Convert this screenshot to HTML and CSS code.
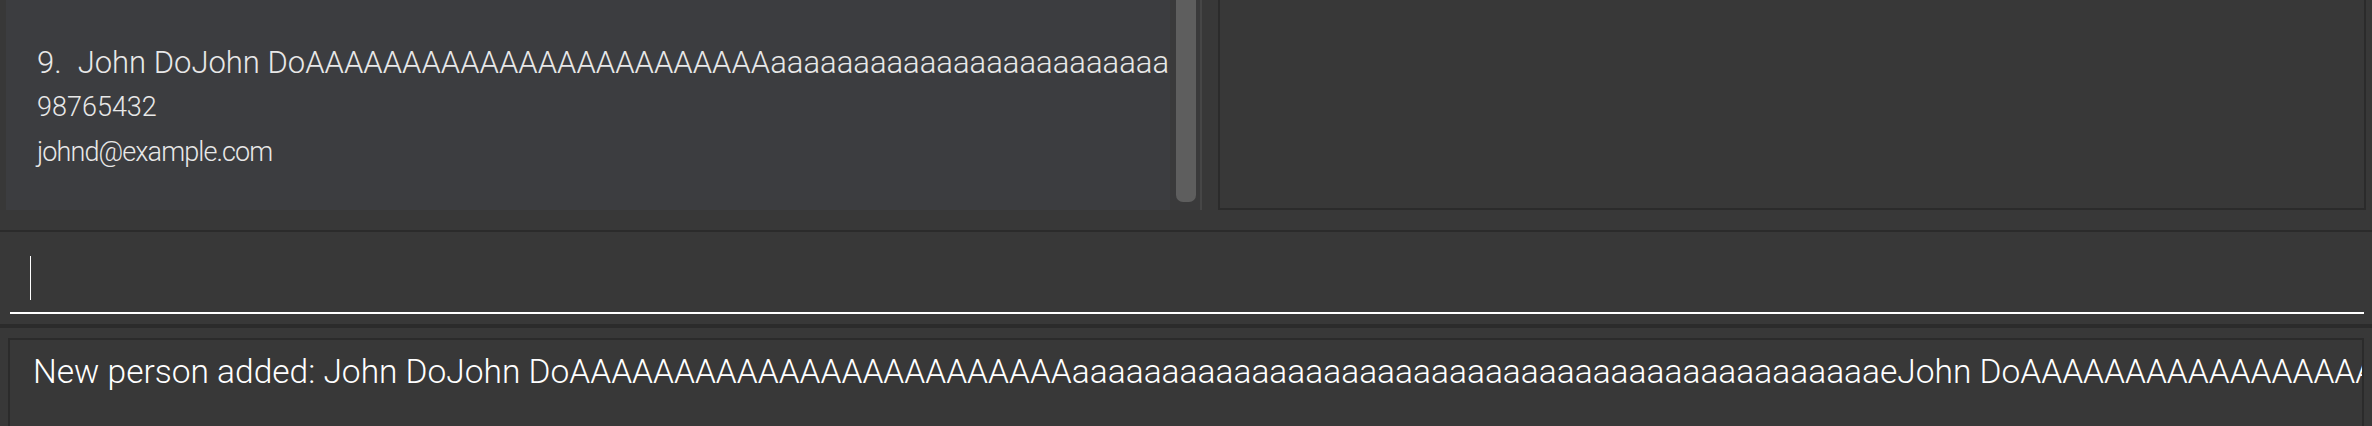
FILE: index.html
```html
<!DOCTYPE html>
<html>
<head>
<meta charset="utf-8">
<link rel="stylesheet" href="styles.css">
</head>
<body>
<div class="app">
  <div class="top">
    <div class="list">
      <div class="card">
        <div class="name-row"><span class="idx">9.</span><span class="name">John DoJohn DoAAAAAAAAAAAAAAAAAAAAAAAAaaaaaaaaaaaaaaaaaaaaaaaaaaaaaaaaaaaaaaaaaaaaaeJohn DoAAAAAAAAAAAAAAAAAAAAAAAA</span></div>
        <div class="phone">98765432</div>
        <div class="email">johnd@example.com</div>
      </div>
      <div class="scroll"><div class="thumb"></div></div>
      <div class="divider"></div>
    </div>
    <div class="detail"></div>
  </div>
  <div class="cmd">
    <div class="cmd-inner"><span class="caret"></span></div>
  </div>
  <div class="result">
    <div class="result-box">
      <div class="result-text">New person added: John DoJohn DoAAAAAAAAAAAAAAAAAAAAAAAAaaaaaaaaaaaaaaaaaaaaaaaaaaaaaaaaaaaaaaaaaaaaaeJohn DoAAAAAAAAAAAAAAAAAAAAAAAAaaaaaaaaaaaaaaaaaaaaaa</div>
    </div>
  </div>
</div>
</body>
</html>
```
FILE: styles.css
```css
html, body {
  margin: 0;
  padding: 0;
}
body {
  background: #383838;
  width: 2372px;
  height: 426px;
  overflow: hidden;
  font-family: Roboto, "Noto Sans", sans-serif;
}
.app {
  display: flex;
  flex-direction: column;
  width: 2372px;
}
.top {
  display: flex;
  height: 210px;
  padding-bottom: 20px;
  border-bottom: 2px solid #2b2b2b;
}
.list {
  display: flex;
  flex: none;
  padding-left: 6px;
}
.card {
  width: 1164px;
  box-sizing: border-box;
  background: #3c3d40;
  padding: 40px 0 0 31px;
  overflow: hidden;
  color: #e8e8e8;
  font-weight: 300;
  white-space: nowrap;
}
.name-row {
  display: flex;
  font-size: 31px;
  line-height: 45px;
}
.idx {
  margin-right: 16px;
}
.phone, .email {
  font-size: 27px;
  line-height: 44.5px;
}
.email {
  letter-spacing: -0.9px;
}
.scroll {
  width: 30px;
  box-sizing: border-box;
  padding: 0 4px 8px 6px;
  background: #3a3a3b;
  display: flex;
  flex-direction: column;
}
.thumb {
  flex: 1;
  background: #5e5e5e;
  border-radius: 0 0 7px 7px;
}
.divider {
  width: 2px;
  background: #464646;
}
.detail {
  margin-left: 16px;
  width: 1148px;
  height: 210px;
  box-sizing: border-box;
  border: 2px solid #2b2b2b;
  border-top: none;
  background: #383838;
}
.cmd {
  height: 92px;
  border-bottom: 4px solid #2b2b2b;
}
.cmd-inner {
  margin-left: 10px;
  width: 2354px;
  height: 82px;
  box-sizing: border-box;
  border-bottom: 2px solid #ffffff;
  display: flex;
}
.caret {
  margin: 24px 0 0 20px;
  width: 1px;
  height: 44px;
  background: #ffffff;
}
.result {
  padding: 10px 8px 0 8px;
}
.result-box {
  height: 120px;
  box-sizing: border-box;
  border: 2px solid #2b2b2b;
  background: #383838;
  overflow: hidden;
}
.result-text {
  padding: 12px 0 0 23px;
  color: #ffffff;
  font-size: 33.5px;
  font-weight: 300;
  white-space: nowrap;
  overflow: hidden;
}
```
